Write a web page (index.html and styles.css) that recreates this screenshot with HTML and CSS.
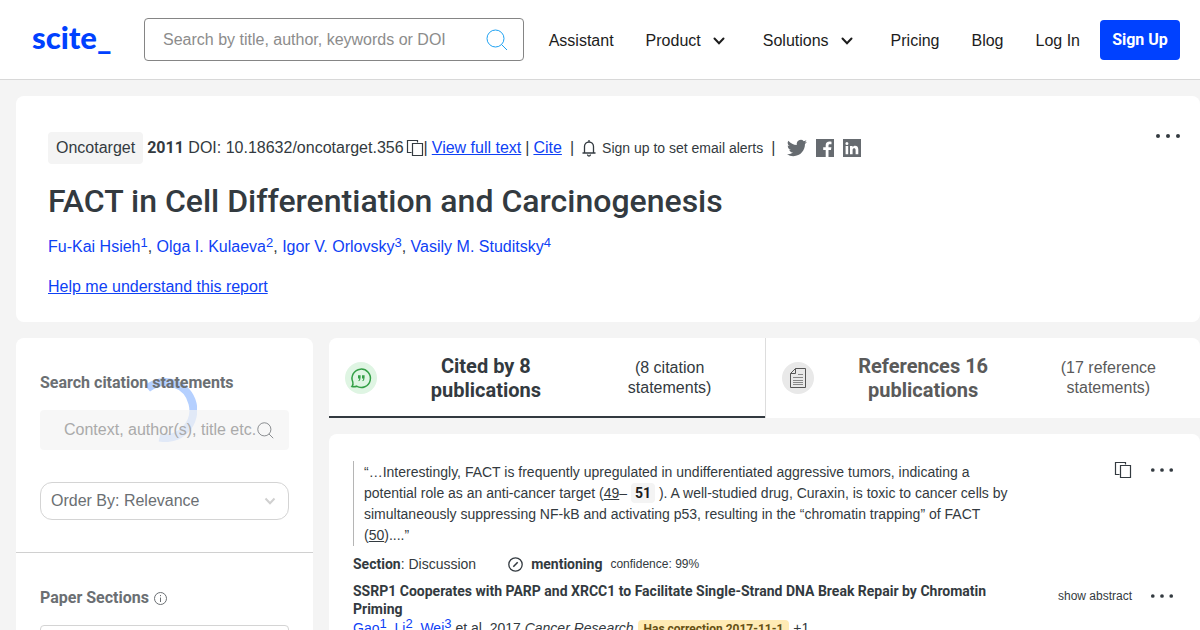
FILE: index.html
```html
<!DOCTYPE html>
<html lang="en">
<head>
<meta charset="utf-8">
<meta name="viewport" content="width=device-width, initial-scale=1">
<title>FACT in Cell Differentiation and Carcinogenesis - scite</title>
<link rel="stylesheet" href="styles.css">
</head>
<body>
<svg class="defs" width="0" height="0" aria-hidden="true">
  <symbol id="search" viewBox="0 0 22 22"><circle cx="9.5" cy="9.5" r="8.5"/><path d="M15.5 15.5 21 21"/></symbol>
  <symbol id="copy" viewBox="0 0 18 18"><path d="M5.5 13.500h-4v-12h10v2M6.500 4.500h10v12h-10z" stroke-width="1.200"/></symbol>
  <symbol id="chevron" viewBox="0 0 12 8"><path d="M1.5 1.5 6 6.2l4.500-4.700"/></symbol>
  <symbol id="dots" viewBox="0 0 26 6"><circle cx="3" cy="3" r="2"/><circle cx="13" cy="3" r="2"/><circle cx="23" cy="3" r="2"/></symbol>
</svg>
<header class="header">
  <a class="logo" href="#">scite_</a>
  <form class="search">
    <input class="search-input" type="text" aria-label="Search" placeholder="Search by title, author, keywords or DOI">
    <button class="search-button" type="button" aria-label="Search"><svg class="icon" width="22" height="22"><use href="#search"/></svg></button>
  </form>
  <nav class="nav">
    <a href="#">Assistant</a>
    <button class="nav-menu" type="button">Product <svg class="icon chevron" width="12" height="8"><use href="#chevron"/></svg></button>
    <button class="nav-menu" type="button">Solutions <svg class="icon chevron" width="12" height="8"><use href="#chevron"/></svg></button>
    <a href="#">Pricing</a>
    <a href="#">Blog</a>
    <a href="#">Log In</a>
  </nav>
  <a class="signup" href="#">Sign Up</a>
</header>
<main class="page">
  <section class="card paper">
    <div class="paper-top">
      <div class="meta">
        <span class="journal">Oncotarget</span>
        <span><strong>2011</strong> DOI: 10.18632/oncotarget.356</span>
        <span class="meta-links"><button class="icon-button" type="button" aria-label="Copy DOI"><svg class="icon" width="18" height="18"><use href="#copy"/></svg></button><span>|</span><a href="#">View full text</a><span>|</span><a href="#">Cite</a></span>
        <span class="divider">|</span>
        <button class="alerts" type="button"><svg class="icon" width="14" height="18" viewBox="0 0 14 18"><path d="M.500 14h13M2.500 14V7.500a4.500 4.500 0 0 1 9 0V14M7 1v2M5.500 15.500a1.500 1.500 0 0 0 3 0" stroke-width="1.300"/></svg>Sign up to set email alerts</button>
        <span class="divider">|</span>
        <span class="social">
          <a href="#" aria-label="Twitter"><svg width="20" height="18" viewBox="0 1.500 24 21"><path d="M23.950 4.570a10 10 0 0 1-2.820.77 4.960 4.960 0 0 0 2.160-2.720c-.95.55-2 .95-3.130 1.180a4.920 4.920 0 0 0-8.380 4.480A13.930 13.930 0 0 1 1.640 3.160a4.920 4.920 0 0 0 1.520 6.570 4.900 4.900 0 0 1-2.230-.61v.06a4.920 4.920 0 0 0 3.950 4.830 5 5 0 0 1-2.210.08 4.940 4.940 0 0 0 4.600 3.420A9.870 9.870 0 0 1 0 19.540a14 14 0 0 0 7.550 2.210c9.050 0 14-7.500 14-13.980l-.02-.64a9.940 9.940 0 0 0 2.420-2.560z"/></svg></a>
          <a href="#" aria-label="Facebook"><svg width="18" height="18" viewBox="0 0 18 18"><path d="M0 0h18v18h-5.500v-7h2.500l.4-2.700h-2.900V6.500c0-.9.400-1.300 1.400-1.300h1.600V2.700c-3.800-.7-5.800.6-5.800 3.500v2.100H7.200V11h2.500v7H0z"/></svg></a>
          <a href="#" aria-label="LinkedIn"><svg width="18" height="18" viewBox="0 0 18 18"><path fill-rule="evenodd" d="M0 0h18v18H0zM2.600 7v8.200h2.600V7zm1.300-4a1.500 1.500 0 1 0 0 3 1.500 1.500 0 0 0 0-3M7 7v8.200h2.600v-4.100c0-2.500 3-2.600 3 0v4.100h2.700v-4.800c0-4.300-4.400-4.500-5.700-2.200V7z"/></svg></a>
        </span>
      </div>
      <button class="icon-button" type="button" aria-label="More options"><svg class="dots" width="26" height="6"><use href="#dots"/></svg></button>
    </div>
    <h1>FACT in Cell Differentiation and Carcinogenesis</h1>
    <p class="authors"><a href="#">Fu-Kai Hsieh<sup>1</sup></a>, <a href="#">Olga I. Kulaeva<sup>2</sup></a>, <a href="#">Igor V. Orlovsky<sup>3</sup></a>, <a href="#">Vasily M. Studitsky<sup>4</sup></a></p>
    <p class="help"><a href="#">Help me understand this report</a></p>
  </section>
  <div class="columns">
    <aside class="card sidebar">
      <svg class="spinner" width="64" height="64" viewBox="0 0 64 64" aria-hidden="true"><path d="M14.500 10.500A28 28 0 1 1 26.500 59.500"/></svg>
      <div class="filter">
        <label class="filter-title" for="context">Search citation statements</label>
        <div class="context">
          <input id="context" type="text" placeholder="Context, author(s), title etc.">
          <svg class="icon" width="17" height="17"><use href="#search"/></svg>
        </div>
        <div class="order">
          <select aria-label="Order"><option>Order By: Relevance</option></select>
          <svg class="icon" width="12" height="8"><use href="#chevron"/></svg>
        </div>
      </div>
      <div class="filter sections">
        <h2 class="filter-title">Paper Sections <svg class="icon" width="13" height="13" viewBox="0 0 13 13"><circle cx="6.500" cy="6.500" r="6"/><path d="M6.500 5.500V10M6.500 3v1.200"/></svg></h2>
        <div class="section-box"></div>
      </div>
    </aside>
    <div class="content">
      <nav class="tabs">
        <a class="tab active" href="#">
          <svg width="32" height="32" viewBox="0 0 32 32"><circle cx="16" cy="16" r="16" fill="#dff5e3"/><path d="M7 24.500q1.500-1.800.800-4.500a9.200 9.200 0 1 1 3.700 4.200q-2 .8-4.500.3z" fill="none" stroke="#349f46" stroke-width="1.500"/><path d="M13 13.200h2.600v2.300q0 2.500-1.600 3.700l-.7-.5q1-.9 1-2.200H13zM17 13.200h2.600v2.300q0 2.500-1.600 3.700l-.7-.5q1-.9 1-2.200H17z" fill="#349f46"/></svg>
          <strong>Cited by 8 publications</strong><span>(8 citation statements)</span>
        </a>
        <a class="tab" href="#">
          <svg width="32" height="32" viewBox="0 0 32 32"><circle cx="16" cy="16" r="16" fill="#e9e9e9"/><path d="M13.500 6.500h10v19h-15v-14zM13.500 6.500v5h-5" fill="none" stroke="#555"/><path d="M16 12.500h5M11 15.500h10M11 18.500h10M11 22.500h10M11 20.500h10" stroke="#888"/></svg>
          <strong>References 16 publications</strong><span>(17 reference statements)</span>
        </a>
      </nav>
      <article class="card citation">
        <div class="row">
          <blockquote>“…Interestingly, FACT is frequently upregulated in undifferentiated aggressive tumors, indicating a potential role as an anti-cancer target (<a href="#">49</a>– <mark>51</mark> ). A well-studied drug, Curaxin, is toxic to cancer cells by simultaneously suppressing NF-kB and activating p53, resulting in the “chromatin trapping” of FACT (<a href="#">50</a>)....”</blockquote>
          <div class="actions">
            <button class="icon-button" type="button" aria-label="Copy"><svg class="icon" width="18" height="18"><use href="#copy"/></svg></button>
            <button class="icon-button" type="button" aria-label="More options"><svg class="dots" width="24" height="6"><use href="#dots"/></svg></button>
          </div>
        </div>
        <div class="facts">
          <span><strong>Section</strong>: Discussion</span>
          <span class="kind"><svg class="icon" width="15" height="15" viewBox="0 0 15 15"><circle cx="7.500" cy="7.500" r="6.700" stroke-width="1.300"/><path d="m5.300 9.700 4.400-4.400" stroke-width="1.600"/></svg><strong>mentioning</strong><small>confidence: 99%</small></span>
        </div>
        <div class="row">
          <h3>SSRP1 Cooperates with PARP and XRCC1 to Facilitate Single-Strand DNA Break Repair by Chromatin Priming</h3>
          <div class="actions paper-actions">
            <button class="abstract" type="button">show abstract</button>
            <button class="icon-button" type="button" aria-label="More options"><svg class="dots" width="24" height="6"><use href="#dots"/></svg></button>
          </div>
        </div>
        <p class="source"><a href="#">Gao<sup>1</sup></a>, <a href="#">Li<sup>2</sup></a>, <a href="#">Wei<sup>3</sup></a> et al. 2017 <em>Cancer Research</em> <span class="notice">Has correction 2017-11-1</span> +1</p>
      </article>
    </div>
  </div>
</main>
</body>
</html>
```
FILE: styles.css
```css
* { box-sizing: border-box; }
body { margin: 0; background: #f4f4f4; color: #333a40; font: 16px/24px "Liberation Sans", Arial, sans-serif; }
a { color: #0e41f5; }
button { border: 0; padding: 0; background: none; color: inherit; font: inherit; }
h1, h3, strong, mark, .filter-title, .signup, .notice { font-family: Roboto, "Liberation Sans", sans-serif; }
svg { display: block; flex: none; }
.defs { position: absolute; }
.icon { fill: none; stroke: currentColor; }
.icon-button { display: flex; }
.dots { fill: #333a40; }
sup { font-size: 13px; line-height: 0; vertical-align: 5px; }

.header { display: flex; align-items: center; height: 80px; padding: 0 20px 0 32px; background: #fff; border-bottom: 1px solid #d8d8d8; }
.logo { width: 112px; padding-bottom: 6px; color: #0041ff; font: 900 31px/32px Lato, sans-serif; text-decoration: none; }
.search { display: flex; align-items: center; flex: 1; height: 43px; padding: 0 15px 0 18px; border: 1px solid #858585; border-radius: 4px; }
.search-input { flex: 1; min-width: 0; border: 0; padding: 0; outline: 0; background: none; font: inherit; }
.search-input::placeholder { color: #8c8c8c; opacity: 1; }
.search-button { color: #1da1f2; }
.nav { display: flex; gap: 32px; padding: 2px 20px 0 25px; color: #1c1c1c; white-space: nowrap; }
.nav a { color: inherit; text-decoration: none; }
.nav-menu { display: flex; align-items: center; gap: 12px; padding-right: 6px; }
.chevron { stroke-width: 2; stroke-linecap: round; }
.signup { width: 80px; border-radius: 4px; background: #0041ff; color: #fff; font-weight: 700; line-height: 40px; text-align: center; text-decoration: none; white-space: nowrap; }

.page { padding: 16px 0 0 16px; }
.card { background: #fff; border-radius: 8px; }
.paper { padding: 36px 19px 23px 32px; }
.paper-top { display: flex; justify-content: space-between; align-items: flex-start; }
.paper-top > .icon-button { padding-top: 1px; }
.meta { display: flex; align-items: center; gap: 4px; white-space: nowrap; }
.journal { padding: 4px 8px; border-radius: 4px; background: #f4f4f4; }
.meta-links { display: flex; align-items: center; gap: 4px; margin-left: -2px; }
.meta-links .icon-button { margin-right: -4px; }
.divider { margin: 0 4px; }
.alerts { display: flex; align-items: center; gap: 6px; font-size: 14px; }
.social { display: flex; align-items: center; gap: 9px; margin-left: 4px; fill: #666b70; }
h1 { margin: 16px 0 0; font-size: 32px; font-weight: 500; line-height: 42px; }
.authors { margin: 13px 0 0; }
.authors a { text-decoration: none; }
.help { margin: 16px 0 0; }

.columns { display: grid; grid-template-columns: 297px 1fr; gap: 16px; margin-top: 16px; }
.sidebar { position: relative; color: #6b6f73; }
.spinner { position: absolute; left: 117px; top: 40px; fill: none; stroke: #b5d0ff; stroke-width: 8; }
.filter { position: relative; padding: 33px 24px 32px; border-bottom: 1px solid #d0d0d0; }
.sections { border: 0; }
.filter-title { display: flex; align-items: center; gap: 5px; margin: 0; font-size: 16px; font-weight: 700; line-height: 24px; }
.context { display: flex; align-items: center; height: 40px; margin-top: 15px; padding: 0 15px 0 24px; border-radius: 4px; background: rgba(244, 244, 244, .7); }
.context input { flex: 1; min-width: 0; border: 0; padding: 0; background: none; font: inherit; }
.context input::placeholder { color: #aaa; opacity: 1; }
.order { display: flex; align-items: center; height: 38px; margin-top: 32px; padding: 0 12px 0 10px; border: 1px solid #d4d4d4; border-radius: 12px; }
.order select { flex: 1; appearance: none; border: 0; padding: 0; background: none; color: inherit; font: inherit; }
.order .icon { stroke: #d0d0d0; stroke-width: 2; }
.section-box { height: 120px; margin-top: 15px; border: 1px solid #d4d4d4; border-radius: 4px; }

.tabs { display: grid; grid-template-columns: 1fr 1fr; overflow: hidden; border-radius: 8px 8px 0 0; background: #fff; }
.tab { display: grid; grid-template-columns: 32px 1fr 1fr; align-items: center; gap: 34px; height: 80px; padding: 0 16px; color: #5a5a5a; line-height: 20px; text-align: center; text-decoration: none; border-left: 1px solid #ddd; }
.tab.active { padding: 2px 20px 0 16px; color: #333a40; border-left: 0; border-bottom: 2px solid #333a40; }
.tab strong { font-size: 20px; line-height: 24px; }
.tab span { padding: 0 8px; }
.citation { margin-top: 16px; padding: 27px 26px 24px 24px; font-size: 14px; }
.row { display: flex; justify-content: space-between; align-items: flex-start; }
blockquote { width: 664px; margin: 0; padding: 1px 0 0 10px; border-left: 1px solid #b5b5b5; line-height: 21px; }
blockquote a { color: inherit; }
mark { padding: 2px 4px; border-radius: 4px; background: #f4f4f4; color: #1c1c1c; font-weight: 700; }
.actions { display: flex; align-items: center; gap: 18px; }
.facts { display: flex; align-items: center; gap: 32px; margin-top: 7px; line-height: 22px; }
.kind { display: flex; align-items: center; gap: 8px; }
.kind small { font-size: 12px; }
h3 { width: 664px; margin: 7px 0 0; font-size: 14px; line-height: 18px; }
.paper-actions { margin-top: 9px; }
.abstract { font-size: 12px; line-height: 24px; }
.source { margin: 0; line-height: 20px; }
.source a { text-decoration: none; }
.notice { padding: 2px 6px; border-radius: 4px; background: #ffebb5; color: #665014; font-size: 12px; font-weight: 700; }
```
